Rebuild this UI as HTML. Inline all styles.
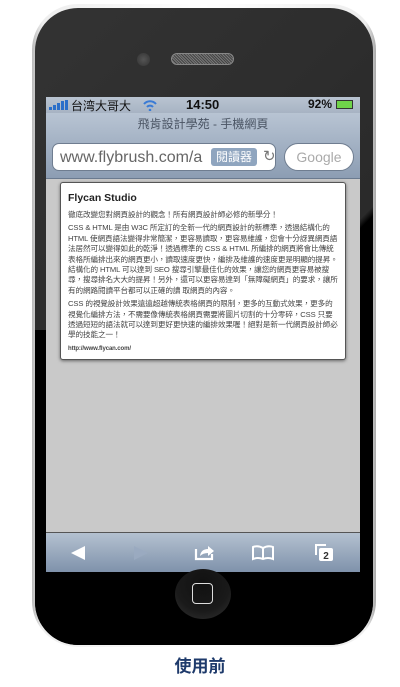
<!DOCTYPE html>
<html><head><meta charset="utf-8"><style>
*{margin:0;padding:0;box-sizing:border-box}
body{width:400px;height:687px;background:#fff;position:relative;overflow:hidden;font-family:"Liberation Sans","Noto Sans CJK TC",sans-serif}
.outer{position:absolute;left:32px;top:4px;width:344px;height:643px;border-radius:46px;background:linear-gradient(90deg,#bbb,#eee 3%,#fff 50%,#eee 97%,#aaa);}
.body{position:absolute;left:35px;top:8px;width:338px;height:637px;border-radius:43px;background:linear-gradient(135deg,#333 0%,#2a2a2a 55%,#000 56%,#000 100%);}
.lower{position:absolute;left:35px;top:330px;width:338px;height:315px;border-radius:0 0 43px 43px;background:#000}
.cam{position:absolute;left:137px;top:53px;width:13px;height:13px;border-radius:50%;background:radial-gradient(#555,#333)}
.spk{position:absolute;left:171px;top:53px;width:63px;height:12px;border-radius:6px;background:repeating-linear-gradient(45deg,#777 0 1px,#444 1px 2px);border:1px solid #888}
.screen{position:absolute;left:46px;top:97px;width:314px;height:475px;background:#c9c9c9;overflow:hidden}
.status{height:16px;background:linear-gradient(#b9c4d1,#a7b3c3);font-size:12px;color:#111;position:relative}
.nav{height:66px;background:linear-gradient(#b8c4d3,#8c9db3);border-bottom:1px solid #6a7a8f;position:relative}
.title{text-align:center;font-size:12px;color:#4a5463;padding-top:2px}
.url{position:absolute;left:6px;top:30px;width:224px;height:28px;background:#fff;border-radius:7px;border:1px solid #6f7d90;font-size:16px;color:#666;padding:5px 0 0 7px;overflow:hidden;white-space:nowrap}
.rd{position:absolute;left:158px;top:4px;width:46px;height:18px;background:#8fa5bf;border-radius:3px;color:#fff;font-size:12px;text-align:center;line-height:18px}
.gg{position:absolute;left:238px;top:30px;width:70px;height:28px;background:#fff;border-radius:14px;border:1px solid #6f7d90;font-size:14px;color:#aaa;text-align:center;line-height:26px}
.card{position:absolute;left:14px;top:85px;width:286px;height:178px;background:#fff;border:1px solid #555;border-radius:3px;padding:6px 7px;box-shadow:0 1px 3px #666}
.card h1{font-size:10.5px;color:#222;margin:3px 0 6px}
.card p{font-size:7.6px;line-height:10.4px;color:#444;margin-bottom:3px;letter-spacing:-0.1px}
.tool{position:absolute;left:0;top:435px;width:314px;height:40px;background:linear-gradient(#b4c1d0,#7f92ab);border-top:1px solid #555}
.home{position:absolute;left:175px;top:569px;width:56px;height:50px;border-radius:50%;background:radial-gradient(circle at 50% 30%,#111,#1a1a1a 60%,#333)}
.home div{position:absolute;left:17px;top:14px;width:21px;height:21px;border:1.5px solid #ddd;border-radius:4px}
.cap{position:absolute;left:0;width:400px;top:652px;text-align:center;font-size:17px;font-weight:bold;color:#1e3a6b}
</style></head><body>
<div class="outer"></div>
<div class="body"></div>
<div class="lower"></div>
<div class="cam"></div><div class="spk"></div>
<div class="screen">
 <div class="status">
  <svg style="position:absolute;left:3px;top:3px" width="22" height="10"><rect x="0" y="7" width="3" height="3" fill="#2b6fc9"/><rect x="4" y="5" width="3" height="5" fill="#2b6fc9"/><rect x="8" y="3" width="3" height="7" fill="#2b6fc9"/><rect x="12" y="1" width="3" height="9" fill="#2b6fc9"/><rect x="16" y="0" width="3" height="10" fill="#2b6fc9"/></svg>
  <span style="position:absolute;left:25px;top:0">台湾大哥大</span>
  <svg style="position:absolute;left:97px;top:2px" width="14" height="12"><path d="M1 5 A8 8 0 0 1 13 5" stroke="#3a7bd5" stroke-width="2" fill="none"/><path d="M4 8 A4 4 0 0 1 10 8" stroke="#3a7bd5" stroke-width="2" fill="none"/><circle cx="7" cy="11" r="1.3" fill="#3a7bd5"/></svg>
  <span style="position:absolute;left:140px;top:0;font-size:13px;font-weight:bold">14:50</span>
  <span style="position:absolute;left:262px;top:0;font-weight:bold">92%</span>
  <span style="position:absolute;left:290px;top:3px;width:17px;height:9px;background:#6fd34a;border:1px solid #333"></span></div>
 <div class="nav"><div class="title">飛肯設計學苑 - 手機網頁</div>
  <div class="url">www.flybrush.com/a<div class="rd">閱讀器</div><span style="position:absolute;left:210px;top:3px;color:#777;font-size:15px">↻</span></div>
  <div class="gg">Google</div></div>
 <div class="card"><h1>Flycan Studio</h1>
 <p>徹底改變您對網頁設計的觀念！所有網頁設計師必修的新學分！</p>
 <p>CSS &amp; HTML 是由 W3C 所定訂的全新一代的網頁設計的新標準，透過結構化的 HTML 使網頁語法變得非常簡潔，更容易讀取，更容易維護，您會十分訝異網頁語法居然可以變得如此的乾淨！透過標準的 CSS &amp; HTML 所編排的網頁將會比傳統表格所編排出來的網頁更小，讀取速度更快，編排及維護的速度更是明顯的提昇。結構化的 HTML 可以達到 SEO 搜尋引擎最佳化的效果，讓您的網頁更容易被搜尋，搜尋排名大大的提昇！另外，還可以更容易達到「無障礙網頁」的要求，讓所有的網路閱讀平台都可以正確的讀 取網頁的內容。</p>
 <p>CSS 的視覺設計效果遠遠超越傳統表格網頁的限制，更多的互動式效果，更多的視覺化編排方法，不需要像傳統表格網頁需要將圖片切割的十分零碎，CSS 只要透過短短的語法就可以達到更好更快速的編排效果喔！絕對是新一代網頁設計師必學的技能之一！</p>
 <p style="font-size:6px;font-weight:bold">http://www.flycan.com/</p></div>
 <div class="tool">
  <svg style="position:absolute;left:24px;top:12px" width="16" height="16"><path d="M15 1 L1 8 L15 15Z" fill="#fff"/></svg>
  <svg style="position:absolute;left:87px;top:12px" width="16" height="16"><path d="M1 1 L15 8 L1 15Z" fill="#9aaac0"/></svg>
  <svg style="position:absolute;left:148px;top:10px" width="22" height="18"><path d="M2 6 V16 H18 V11" stroke="#fff" stroke-width="2.2" fill="none"/><path d="M6 13 Q7 6 14 6 V3 L20 8 L14 13 V10 Q9 10 6 13Z" fill="#fff"/></svg>
  <svg style="position:absolute;left:205px;top:12px" width="24" height="16"><path d="M2 2 Q7 0 12 3 Q17 0 22 2 V14 Q17 12 12 14 Q7 12 2 14Z M12 3 V14" stroke="#fff" stroke-width="2" fill="none"/></svg>
  <svg style="position:absolute;left:268px;top:9px" width="20" height="20"><path d="M2 13 V3 H12" stroke="#fff" stroke-width="2" fill="none"/><rect x="5" y="6" width="14" height="13" rx="2" fill="#fff"/><text x="12" y="17" font-size="10" font-weight="bold" text-anchor="middle" fill="#333" font-family="Liberation Sans">2</text></svg>
 </div>
</div>
<div class="home"><div></div></div>
<div class="cap">使用前</div>
</body></html>
